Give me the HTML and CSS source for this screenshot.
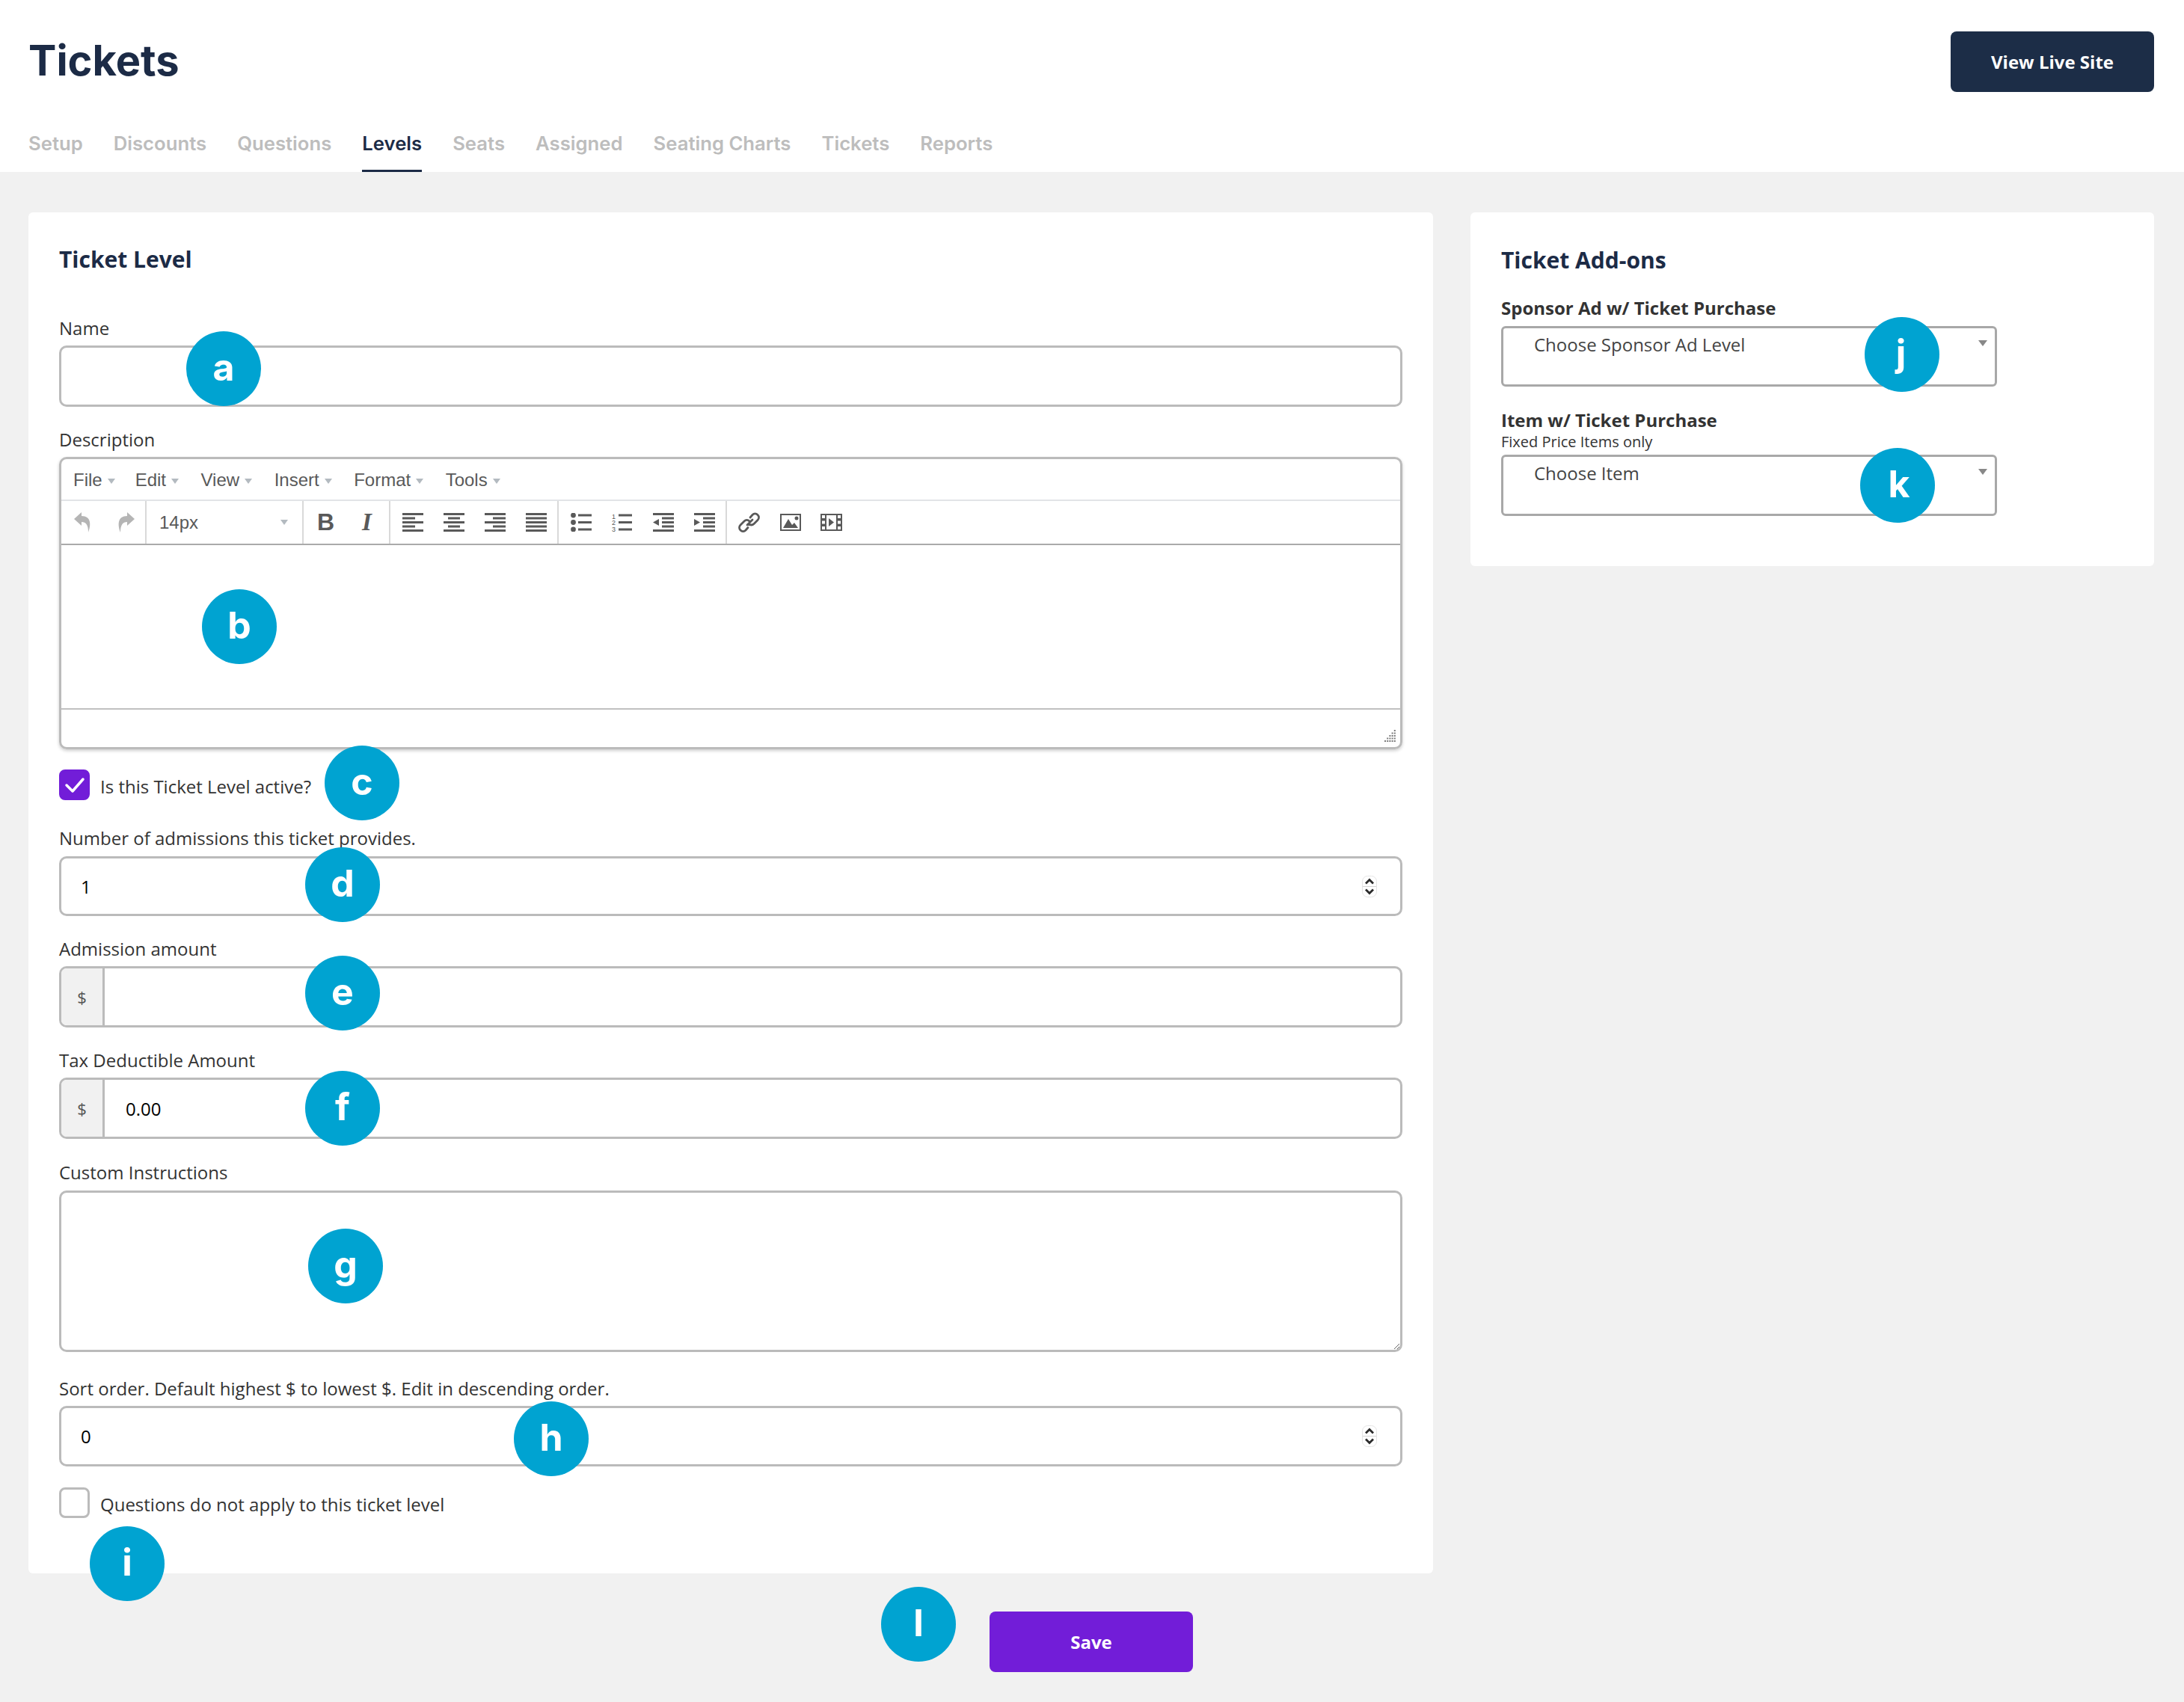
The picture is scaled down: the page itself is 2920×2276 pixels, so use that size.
FILE: index.html
```html
<!DOCTYPE html>
<html lang="en">
<head>
<meta charset="utf-8">
<title>Tickets</title>
<link rel="stylesheet" href="styles.css">
</head>
<body>
<header class="page-header">
  <div class="title-row">
    <h1 class="page-title">Tickets</h1>
    <a class="live-btn">View Live Site</a>
  </div>
  <nav class="tabs">
    <a class="tab">Setup</a><a class="tab">Discounts</a><a class="tab">Questions</a><a class="tab active">Levels</a><a class="tab">Seats</a><a class="tab">Assigned</a><a class="tab">Seating Charts</a><a class="tab">Tickets</a><a class="tab">Reports</a>
  </nav>
</header>

<main class="content">
  <section class="card card-main">
    <h2 class="card-title">Ticket Level</h2>

    <div class="field">
      <label class="lbl">Name</label>
      <input class="ctl" type="text">
    </div>

    <div class="field field-desc">
      <label class="lbl">Description</label>
      <div class="editor">
        <div class="menubar">
          <span class="menu m-file">File<i class="caret"></i></span>
          <span class="menu">Edit<i class="caret"></i></span>
          <span class="menu">View<i class="caret"></i></span>
          <span class="menu">Insert<i class="caret"></i></span>
          <span class="menu">Format<i class="caret"></i></span>
          <span class="menu">Tools<i class="caret"></i></span>
        </div>
        <div class="toolbar">
          <div class="tgroup tg-history">
            <span class="tbtn tbtn-hist"><svg width="24" height="28" viewBox="0 0 24 28"><path class="ic-off" d="M10 0 0 9l10 9v-5c6 0 9 4 9 14 4-10 4-22-9-22z"/></svg></span>
            <span class="tbtn tbtn-hist"><svg width="24" height="28" viewBox="0 0 24 28"><path class="ic-off" d="M14 0l10 9-10 9v-5c-6 0-9 4-9 14-4-10-4-22 9-22z"/></svg></span>
          </div>
          <div class="tgroup tg-size">
            <span class="size-val">14px</span><i class="caret caret-size"></i>
          </div>
          <div class="tgroup tg-format">
            <span class="tbtn glyph-b">B</span>
            <span class="tbtn glyph-i">I</span>
          </div>
          <div class="tgroup">
            <span class="tbtn"><svg class="ic" width="28" height="25" viewBox="0 0 28 25"><path d="M0 0h28v3H0zM0 5.500h17v3H0zM0 11h28v3H0zM0 16.500h17v3H0zM0 22h28v3H0z"/></svg></span>
            <span class="tbtn"><svg class="ic" width="28" height="25" viewBox="0 0 28 25"><path d="M0 0h28v3H0zM6 5.500h16v3H6zM0 11h28v3H0zM6 16.500h16v3H6zM0 22h28v3H0z"/></svg></span>
            <span class="tbtn"><svg class="ic" width="28" height="25" viewBox="0 0 28 25"><path d="M0 0h28v3H0zM11 5.500h17v3H11zM0 11h28v3H0zM11 16.500h17v3H11zM0 22h28v3H0z"/></svg></span>
            <span class="tbtn"><svg class="ic" width="28" height="25" viewBox="0 0 28 25"><path d="M0 0h28v3H0zM0 5.500h28v3H0zM0 11h28v3H0zM0 16.500h28v3H0zM0 22h28v3H0z"/></svg></span>
          </div>
          <div class="tgroup">
            <span class="tbtn"><svg class="ic" width="28" height="25" viewBox="0 0 28 25"><circle cx="3.500" cy="3" r="3.400"/><circle cx="3.500" cy="12.500" r="3.400"/><circle cx="3.500" cy="22" r="3.400"/><path d="M10 1.500h18v3H10zM10 11h18v3H10zM10 20.500h18v3H10z"/></svg></span>
            <span class="tbtn"><svg class="ic" width="28" height="25" viewBox="0 0 28 25"><text class="ic-num" x="0" y="7.500">1</text><text class="ic-num" x="0" y="16">2</text><text class="ic-num" x="0" y="24.500">3</text><path d="M9 1.500h18v3H9zM9 11h18v3H9zM9 20.500h18v3H9z"/></svg></span>
            <span class="tbtn"><svg class="ic" width="28" height="25" viewBox="0 0 28 25"><path d="M0 0h28v3H0zM12 5.500h16v3H12zM12 11h16v3H12zM12 16.500h16v3H12zM0 22h28v3H0zM8 8v9l-8-4.500z"/></svg></span>
            <span class="tbtn"><svg class="ic" width="28" height="25" viewBox="0 0 28 25"><path d="M0 0h28v3H0zM12 5.500h16v3H12zM12 11h16v3H12zM12 16.500h16v3H12zM0 22h28v3H0zM0 8v9l8-4.500z"/></svg></span>
          </div>
          <div class="tgroup tg-last">
            <span class="tbtn"><svg width="30" height="28" viewBox="0 0 30 28"><path class="ic-line" d="M12 17l7-7M16 7l3-3.500c2-2 5-2 7 0s2 5 0 7l-5 5c-2 2-5 2-7 0M15 12c-2-2-5-2-7 0l-5 5c-2 2-2 5 0 7s5 2 7 0l3-3.500"/></svg></span>
            <span class="tbtn"><svg class="ic" width="28" height="23" viewBox="0 0 28 23"><path fill-rule="evenodd" d="M0 0h28v23H0zM2 2v19h24V2z"/><path d="M4 19 11 7l5 8 3-3 5 7z"/><circle cx="22" cy="6" r="2.500"/></svg></span>
            <span class="tbtn"><svg class="ic" width="29" height="23" viewBox="0 0 29 23"><path fill-rule="evenodd" d="M0 0h29v23H0zM2 2v4h4V2zM2 9.500v4h4v-4zM2 17v4h4v-4zM23 2v4h4V2zM23 9.500v4h4v-4zM23 17v4h4v-4zM8 2v19h13V2z"/><path d="M11 6v11l7-5.500z"/></svg></span>
          </div>
        </div>
        <div class="editor-body"></div>
        <div class="statusbar">
          <svg width="16" height="16" viewBox="0 0 16 16" class="grip">
            <g class="grip-dots">
              <rect x="12.800" y="0" width="2" height="2"/>
              <rect x="9.600" y="3.500" width="2" height="2"/><rect x="12.800" y="3.500" width="2" height="2"/>
              <rect x="6.400" y="7" width="2" height="2"/><rect x="9.600" y="7" width="2" height="2"/><rect x="12.800" y="7" width="2" height="2"/>
              <rect x="3.200" y="10.500" width="2" height="2"/><rect x="6.400" y="10.500" width="2" height="2"/><rect x="9.600" y="10.500" width="2" height="2"/><rect x="12.800" y="10.500" width="2" height="2"/>
              <rect x="0" y="14" width="2" height="2"/><rect x="3.200" y="14" width="2" height="2"/><rect x="6.400" y="14" width="2" height="2"/><rect x="9.600" y="14" width="2" height="2"/><rect x="12.800" y="14" width="2" height="2"/>
            </g>
          </svg>
        </div>
      </div>
    </div>

    <div class="check-row check-active">
      <span class="check checked"><svg width="28" height="22" viewBox="0 0 28 22"><path class="tick" d="M3 11l8 8L25 3"/></svg></span>
      <span class="check-text">Is this Ticket Level active?</span>
    </div>

    <div class="field">
      <label class="lbl lbl-wide">Number of admissions this ticket provides.</label>
      <div class="ctl ctl-flex ctl-short">
        <input class="bare" type="text" value="1">
        <svg class="spin" width="20" height="29" viewBox="0 0 20 29"><rect x=".5" y=".5" width="19" height="28" rx="7" fill="#fff" stroke="#e4e4e4"/><path d="M1 14.500h18" stroke="#d4d4d4"/><path class="spin-ch" d="M5 10.500 10 5.500l5 5M5 18.500l5 5 5-5"/></svg>
      </div>
    </div>

    <div class="field">
      <label class="lbl">Admission amount</label>
      <div class="ctl ctl-flex ctl-group">
        <span class="addon">$</span>
        <input class="bare" type="text">
      </div>
    </div>

    <div class="field field-tax">
      <label class="lbl">Tax Deductible Amount</label>
      <div class="ctl ctl-flex ctl-group">
        <span class="addon">$</span>
        <input class="bare" type="text" value="0.00">
      </div>
    </div>

    <div class="field field-custom">
      <label class="lbl lbl-wide">Custom Instructions</label>
      <textarea class="ctl ctl-area"></textarea>
    </div>

    <div class="field field-sort">
      <label class="lbl">Sort order. Default highest $ to lowest $. Edit in descending order.</label>
      <div class="ctl ctl-flex ctl-sort">
        <input class="bare" type="text" value="0">
        <svg class="spin" width="20" height="29" viewBox="0 0 20 29"><rect x=".5" y=".5" width="19" height="28" rx="7" fill="#fff" stroke="#e4e4e4"/><path d="M1 14.500h18" stroke="#d4d4d4"/><path class="spin-ch" d="M5 10.500 10 5.500l5 5M5 18.500l5 5 5-5"/></svg>
      </div>
    </div>

    <div class="check-row">
      <span class="check"></span>
      <span class="check-text">Questions do not apply to this ticket level</span>
    </div>
  </section>

  <section class="card card-side">
    <h2 class="card-title side-title">Ticket Add-ons</h2>
    <label class="side-lbl">Sponsor Ad w/ Ticket Purchase</label>
    <div class="pick pick-first"><span>Choose Sponsor Ad Level</span><i class="pick-arrow"></i></div>
    <label class="side-lbl side-lbl-item">Item w/ Ticket Purchase</label>
    <div class="side-sub">Fixed Price Items only</div>
    <div class="pick"><span>Choose Item</span><i class="pick-arrow"></i></div>
  </section>
</main>

<div class="actions"><a class="save-btn">Save</a></div>

<span class="badge b-a">a</span>
<span class="badge b-b">b</span>
<span class="badge b-c">c</span>
<span class="badge b-d">d</span>
<span class="badge b-e">e</span>
<span class="badge b-f">f</span>
<span class="badge b-g">g</span>
<span class="badge b-h">h</span>
<span class="badge b-i">i</span>
<span class="badge b-j">j</span>
<span class="badge b-k">k</span>
<span class="badge b-l">l</span>
</body>
</html>
```
FILE: styles.css
```css
* { box-sizing: border-box; }
html, body { margin: 0; padding: 0; }
body {
  position: relative;
  min-height: 2276px;
  background: #f1f1f1;
  font-family: "Open Sans", "Liberation Sans", sans-serif;
  color: #333;
  font-size: 24px;
}

/* Header */
.page-header {
  height: 230px;
  background: #fff;
  display: flex;
  flex-direction: column;
  padding: 42px 40px 0 38px;
}
.title-row { display: flex; justify-content: space-between; align-items: flex-start; height: 81px; }
.page-title {
  margin: 0;
  font-family: Inter, "Open Sans", sans-serif;
  font-weight: 700;
  font-size: 56px;
  line-height: 78px;
  color: #1c2b46;
}
.live-btn {
  width: 272px; height: 81px;
  display: flex; align-items: center; justify-content: center;
  background: #1c2d47;
  color: #fff;
  border-radius: 8px;
  font-weight: 700;
  font-size: 24px;
}
.tabs { margin-top: auto; display: flex; gap: 41px; }
.tab {
  font-family: Inter, "Open Sans", sans-serif;
  font-weight: 600;
  font-size: 25.700px;
  line-height: 34px;
  padding-bottom: 18px;
  border-bottom: 3px solid transparent;
  color: #bdbdbd;
}
.tab.active { color: #1c2b46; border-bottom-color: #1c2b46; }

/* Layout */
.content {
  display: grid;
  grid-template-columns: 1878px 914px;
  column-gap: 50px;
  align-items: start;
  padding: 54px 40px 0 38px;
}
.card { background: #fff; border-radius: 6px; }
.card-main { padding: 40px 41px 74px; }
.card-side { padding: 41px 41px 67px; }
.card-title {
  margin: 0 0 54px;
  font-size: 30px;
  line-height: 46px;
  font-weight: 700;
  color: #1c2b46;
}
.side-title { margin-bottom: 26px; }

/* Fields */
.field { margin-bottom: 29px; }
.field-desc { margin-bottom: 27px; }
.field-tax { margin-bottom: 30px; }
.field-custom { margin-bottom: 34px; }
.field-sort { margin-bottom: 28px; }
.lbl { display: block; line-height: 30px; margin-bottom: 8px; color: #333; }
.lbl-wide { margin-bottom: 9px; }
.ctl {
  display: block;
  width: 100%;
  height: 82px;
  border: 3px solid #bbb;
  border-radius: 10px;
  background: #fff;
  outline: none;
  font: inherit;
  color: #000;
  padding: 0;
}
.ctl-short { height: 80px; }
.ctl-sort { height: 81px; }
.ctl-area { height: 216px; }
.ctl-flex { display: flex; align-items: center; overflow: hidden; }
.bare {
  flex: 1;
  min-width: 0;
  height: 100%;
  border: 0;
  outline: none;
  background: transparent;
  font: inherit;
  color: #000;
  padding: 0 26px;
}
.ctl-group .bare { padding-left: 28px; }
.spin { margin-right: 31px; flex: none; }
.spin-ch { fill: none; stroke: #2b2b2b; stroke-width: 2.800; }
.addon {
  width: 58px;
  height: 100%;
  flex: none;
  display: flex; align-items: center; justify-content: center;
  background: #f1f1f1;
  border-right: 3px solid #bbb;
  color: #555;
  font-size: 22px;
}

/* Editor */
.editor {
  height: 391px;
  border: 3px solid #bbb;
  border-radius: 10px;
  box-shadow: 0 2px 4px rgba(0,0,0,.2);
  display: flex;
  flex-direction: column;
  font-family: "Liberation Sans", Arial, sans-serif;
  color: #595959;
}
.menubar { height: 56px; display: flex; align-items: center; padding: 2px 0 0 16px; border-bottom: 2px solid #e2e4e7; flex: none; }
.menu { margin-right: 29.500px; display: flex; align-items: center; font-size: 24px; }
.m-file { margin-right: 27px; }
.caret {
  display: inline-block;
  width: 0; height: 0;
  margin-left: 7px;
  margin-top: 3px;
  border-left: 5.500px solid transparent;
  border-right: 5.500px solid transparent;
  border-top: 7px solid #b3bac0;
}
.toolbar { height: 59px; display: flex; flex: none; border-bottom: 2px solid #aaa; }
.tgroup { display: flex; align-items: center; height: 100%; border-right: 2px solid #d9d9d9; padding: 0 1px 0 2px; }
.tg-history { width: 114px; padding: 0 0 0 1px; gap: 1px; }
.tg-size { width: 210px; padding: 0 19px 0 17px; justify-content: space-between; }
.tg-format { width: 116px; padding-right: 2px; }
.tg-last { border-right: 0; }
.tbtn { width: 55px; height: 100%; display: flex; align-items: center; justify-content: center; flex: none; }
.tbtn-hist { width: 56px; }
.size-val { font-size: 24px; }
.caret-size { margin: 0; }
.ic { fill: #595959; }
.ic-off { fill: #b5b5b5; }
.ic-num { font-family: "Liberation Sans", sans-serif; font-size: 9px; fill: #595959; }
.ic-line { fill: none; stroke: #595959; stroke-width: 2.800; stroke-linecap: round; }
.glyph-b { font-family: "Liberation Sans", sans-serif; font-weight: 700; font-size: 32px; }
.glyph-i { font-family: "Liberation Serif", serif; font-style: italic; font-weight: 700; font-size: 33px; }
.editor-body { flex: 1; background: #fff; }
.statusbar { height: 52px; flex: none; border-top: 2px solid #c0c0c0; display: flex; align-items: flex-end; justify-content: flex-end; padding: 0 5px 7px 0; }
.grip-dots { fill: #7a7a7a; }

/* Checks */
.check-row { display: flex; align-items: center; gap: 14px; }
.check-active { margin-bottom: 36px; }
.check {
  width: 41px; height: 41px;
  border: 3px solid #bbb;
  border-radius: 8px;
  background: #fff;
  display: flex; align-items: center; justify-content: center;
  flex: none;
}
.check.checked { background: #721dd8; border-color: #721dd8; }
.tick { fill: none; stroke: #fff; stroke-width: 3.500; stroke-linecap: round; stroke-linejoin: round; }
.check-text { line-height: 30px; position: relative; top: 2px; }

/* Side card */
.side-lbl { display: block; font-weight: 700; line-height: 30px; margin-bottom: 9px; color: #333; }
.side-lbl-item { margin-bottom: 1px; }
.side-sub { font-size: 20px; line-height: 26px; margin-bottom: 4px; }
.pick {
  width: 663px;
  height: 82px;
  border: 3px solid #a8a8a8;
  border-radius: 6px;
  padding: 2px 0 0 41px;
  line-height: 40px;
  color: #444;
  position: relative;
}
.pick-first { height: 81px; margin-bottom: 30px; }
.pick-arrow {
  position: absolute;
  top: 16px; right: 10px;
  width: 0; height: 0;
  border-left: 6px solid transparent;
  border-right: 6px solid transparent;
  border-top: 8px solid #888;
}

/* Actions */
.actions { display: flex; justify-content: center; margin-top: 51px; padding-right: 2px; }
.save-btn {
  width: 272px; height: 81px;
  display: flex; align-items: center; justify-content: center;
  background: #721dd8;
  color: #fff;
  border-radius: 8px;
  font-weight: 700;
  font-size: 24px;
}

/* Annotation badges */
.badge {
  position: absolute;
  width: 100px; height: 100px;
  border-radius: 50%;
  background: #00a3d1;
  color: #fff;
  font-family: Inter, "Open Sans", sans-serif;
  font-weight: 700;
  font-size: 50px;
  line-height: 96px;
  text-align: center;
}
.b-a { left: 249px; top: 443px; }
.b-b { left: 270px; top: 788px; }
.b-c { left: 434px; top: 997px; }
.b-d { left: 408px; top: 1133px; }
.b-e { left: 408px; top: 1278px; }
.b-f { left: 408px; top: 1432px; }
.b-g { left: 412px; top: 1643px; }
.b-h { left: 687px; top: 1874px; }
.b-i { left: 120px; top: 2041px; }
.b-j { left: 2493px; top: 424px; text-indent: -3px; }
.b-k { left: 2487px; top: 599px; text-indent: 4px; }
.b-l { left: 1178px; top: 2122px; }
```
